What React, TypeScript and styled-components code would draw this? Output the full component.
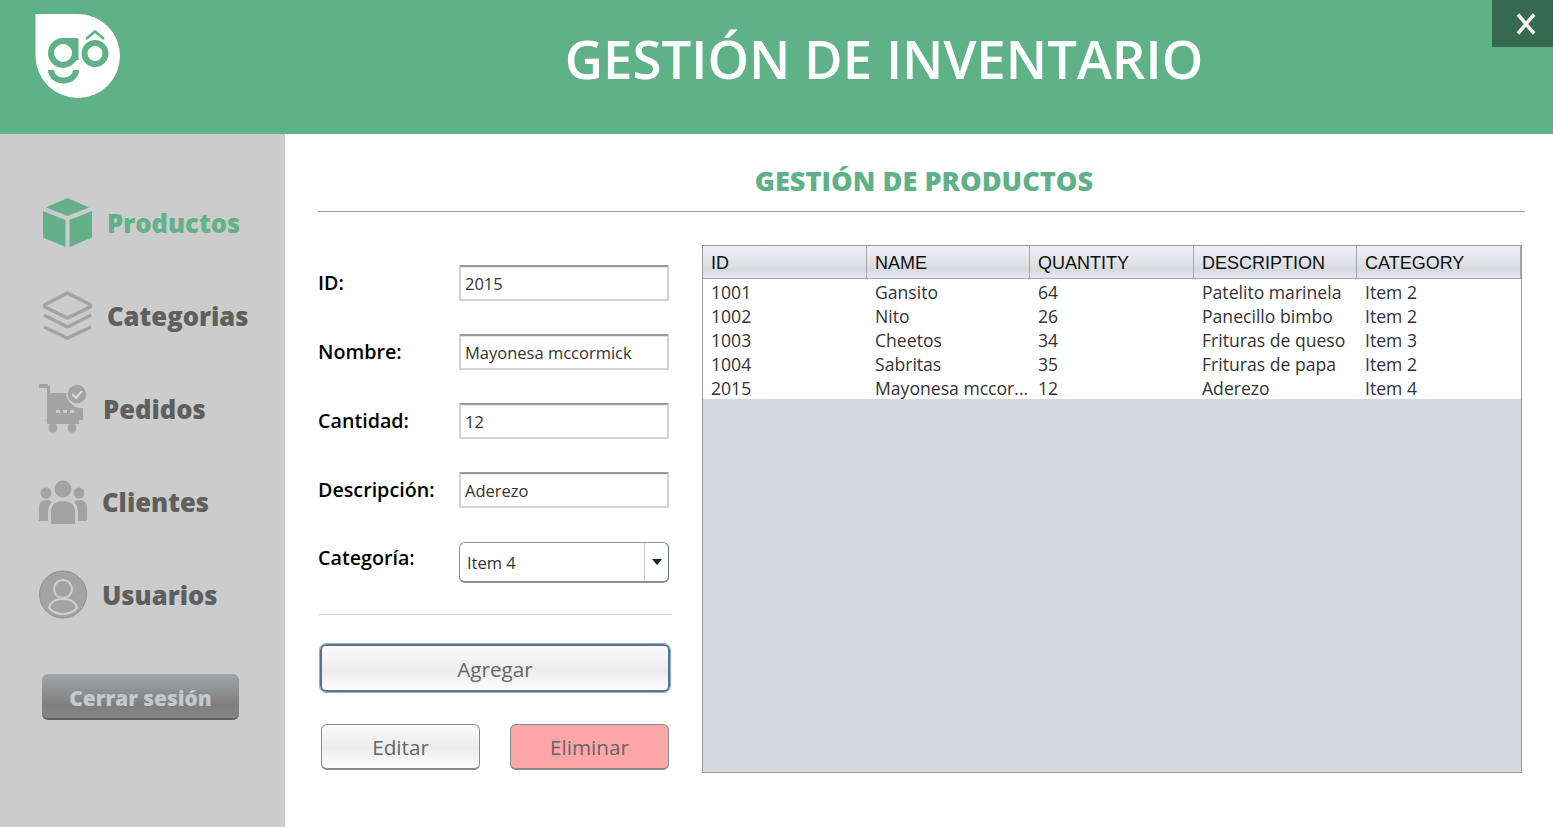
import styled, { createGlobalStyle } from "styled-components";

const green = "#5fb188";
const greyIcon = "#a3a3a3";
const uiFont = `"Open Sans", "Noto Sans", sans-serif`;

const GlobalStyle = createGlobalStyle`
  html, body {
    margin: 0;
    padding: 0;
    background: #fff;
    overflow: hidden;
  }
  * {
    box-sizing: border-box;
  }
`;

const Page = styled.div`
  width: 1553px;
  height: 827px;
  display: flex;
  flex-direction: column;
  font-family: ${uiFont};
`;

const Header = styled.header`
  position: relative;
  height: 134px;
  flex: none;
  background: ${green};
  display: flex;
  align-items: flex-start;
  padding: 14px 0 0 35px;
`;

const HeaderTitle = styled.h1`
  margin: 10px 0 0 -120px;
  width: 1526px;
  padding-left: 240px;
  text-align: center;
  font-size: 52.8px;
  line-height: 70px;
  font-weight: 600;
  color: #fff;
`;

const CloseButton = styled.button`
  position: absolute;
  top: 0;
  right: 0;
  width: 61px;
  height: 47px;
  border: none;
  padding: 0 0 0 7px;
  background: #36694f;
  display: flex;
  align-items: center;
  justify-content: center;
`;

const Content = styled.div`
  flex: 1;
  display: flex;
  min-height: 0;
`;

const Sidebar = styled.nav`
  width: 285px;
  flex: none;
  background: #cccccc;
  display: flex;
  flex-direction: column;
  padding-top: 64px;
`;

const NavItem = styled.a<{ $indent: number; $gap: number; $active?: boolean }>`
  height: 49px;
  margin-bottom: 44px;
  padding-left: ${(p) => p.$indent}px;
  display: flex;
  align-items: center;
  gap: ${(p) => p.$gap}px;
  font-size: 25.6px;
  font-weight: 800;
  color: ${(p) => (p.$active ? "#63b08a" : "#5f5f5f")};
`;

const NavLabel = styled.span`
  padding-top: 1px;
`;

const LogoutButton = styled.button`
  margin: 11px 0 0 42px;
  width: 197px;
  height: 46px;
  border: none;
  border-bottom: 2px solid #626266;
  border-radius: 6px;
  background: linear-gradient(#a3a5a8, #7f7f7f 70%, #858585);
  color: #c4c8d0;
  font-family: ${uiFont};
  font-size: 20.8px;
  font-weight: 800;
  padding: 4px 0 0;
`;

const Main = styled.main`
  flex: 1;
  padding: 0 28px 0 33px;
`;

const SectionTitle = styled.div`
  height: 78px;
  padding: 30px 0 0 5px;
  border-bottom: 1px solid #9a9a9a;
  text-align: center;
  font-size: 27.2px;
  line-height: 34px;
  font-weight: 800;
  color: ${green};
`;

const Body = styled.div`
  display: grid;
  grid-template-columns: 354px 820px;
  column-gap: 30px;
  padding-top: 33px;
`;

const Form = styled.form`
  padding-top: 20px;
  display: flex;
  flex-direction: column;
`;

const Row = styled.label`
  height: 36px;
  margin-bottom: 33px;
  display: grid;
  grid-template-columns: 141px 210px;
  align-items: center;
`;

const FieldLabel = styled.span`
  font-size: 19.7px;
  font-weight: 600;
  color: #000;
  margin-top: -2px;
`;

const TextInput = styled.input`
  width: 210px;
  height: 36px;
  padding: 0 4px;
  border: 2px solid #d4d4d4;
  border-top-color: #9a9a9a;
  box-shadow: inset 0 1px 0 #e9e9e9;
  outline: none;
  background: #fff;
  font-family: ${uiFont};
  font-size: 16.5px;
  color: #333;
`;

const SelectRow = styled.label`
  height: 41px;
  margin-top: 1px;
  display: grid;
  grid-template-columns: 141px 210px;
  align-items: start;
`;

const SelectLabel = styled(FieldLabel)`
  margin-top: 0;
  line-height: 32px;
`;

const SelectBox = styled.div`
  width: 210px;
  height: 41px;
  display: flex;
  border: 1px solid #8a919c;
  border-right-color: #5a6a7c;
  border-bottom-width: 2px;
  border-radius: 6px;
  background: #fff;
  font-size: 16.5px;
  color: #333;
`;

const SelectValue = styled.span`
  flex: 1;
  padding-left: 7px;
  line-height: 39px;
`;

const SelectArrow = styled.span`
  width: 24px;
  border-left: 1px solid #c9ccd3;
  display: flex;
  align-items: center;
  justify-content: center;

  &::after {
    content: "";
    border-left: 5px solid transparent;
    border-right: 5px solid transparent;
    border-top: 6px solid #222;
  }
`;

const Divider = styled.hr`
  width: 354px;
  height: 1px;
  margin: 31px 0 29px;
  border: none;
  background: #d3d6dd;
`;

const ActionButton = styled.button<{ $danger?: boolean; $wide?: boolean }>`
  width: ${(p) => (p.$wide ? "350px" : "159px")};
  height: ${(p) => (p.$wide ? "48px" : "46px")};
  border-radius: 6px;
  border: ${(p) => (p.$wide ? "2px solid #5d7288" : "1px solid #8a8a8a")};
  border-bottom-width: 2px;
  outline: ${(p) => (p.$wide ? "1px solid #8ab3d8" : "none")};
  background: ${(p) =>
    p.$danger ? "#ffa6a8" : "linear-gradient(#fbfbfb, #ececec 55%, #fdfdfd)"};
  font-family: ${uiFont};
  font-size: 20.7px;
  color: #666;
  padding: 1px 0 0;
`;

const ButtonRow = styled.div`
  display: flex;
  gap: 30px;
  margin: 32px 0 0 3px;
`;

const WideButtonWrap = styled.div`
  padding-left: 2px;
`;

const TablePanel = styled.div`
  width: 820px;
  height: 528px;
  border: 1px solid #9a9aa3;
  background: #d5d8e0;
`;

const Table = styled.table`
  width: 100%;
  table-layout: fixed;
  border-collapse: separate;
  border-spacing: 0;
  background: #fff;
`;

const HeadCell = styled.th`
  height: 33px;
  padding: 2px 8px 0 8px;
  text-align: left;
  font-family: "Liberation Sans", Arial, sans-serif;
  font-size: 18px;
  font-weight: 400;
  color: #111;
  background: linear-gradient(#f0f1f4, #d9dbe1 75%, #e6e7ea);
  border-bottom: 1px solid #a4a6ae;
  border-right: 1px solid #a4a6ae;
`;

const BodyCell = styled.td`
  height: 24px;
  padding: 3px 0 0 8px;
  font-size: 17.6px;
  font-weight: 500;
  line-height: 21px;
  color: #333;
  white-space: nowrap;
`;

const Logo = () => (
  <svg width="86" height="85" viewBox="0 0 86 85">
    <path d="M0.5 0H43A42 42 0 0 1 43 84A42.5 42 0 0 1 0.5 42Z" fill="#fff" />
    <g fill="none" stroke={green} strokeWidth="6">
      <circle cx="28" cy="39" r="12" />
      <path d="M27 27H40.5V46" />
      <path d="M16 56a12.5 10.5 0 0 0 25 0" />
      <circle cx="60" cy="39.5" r="10.5" />
      <path d="M51 25L60 17.5L69 25" strokeWidth="2.5" />
    </g>
  </svg>
);

const CubeIcon = () => (
  <svg width="49" height="49" viewBox="0 0 49 49" fill="#63b08a">
    <path d="M24.5 0L46 9.5L24.5 18L3 9.5Z" />
    <path d="M0 13L22.5 22V49L0 39.5Z" />
    <path d="M49 13L26.5 22V49L49 39.5Z" />
  </svg>
);

const LayersIcon = () => (
  <svg width="49" height="49" viewBox="0 0 49 49" fill="none" stroke={greyIcon} strokeWidth="3.5">
    <path d="M24.5 2L47 13.5Q48 15 47 16L24.5 27L2 16Q1 15 2 13.5Z" />
    <path d="M1 24L24.5 36L48 24" />
    <path d="M1 36L24.5 47L48 36" />
  </svg>
);

const CartIcon = () => (
  <svg width="49" height="49" viewBox="0 0 49 49" fill={greyIcon}>
    <path d="M0 0H8L11 3V10H8V4H0Z" />
    <path d="M8 9H28A14 14 0 0 0 44 24V36H40V40H8V37L6 36H8Z" />
    <circle cx="38" cy="10" r="10" stroke="#cccccc" strokeWidth="1.5" />
    <path d="M33 10L37 14L43 7" fill="none" stroke="#dcdcdc" strokeWidth="2" />
    <circle cx="14" cy="44" r="4.5" />
    <circle cx="33" cy="44" r="4.5" />
    <rect x="17" y="26" width="4" height="3" fill="#cccccc" />
    <rect x="24" y="26" width="4" height="3" fill="#cccccc" />
    <rect x="31" y="26" width="4" height="3" fill="#cccccc" />
  </svg>
);

const PeopleIcon = () => (
  <svg width="48" height="44" viewBox="0 0 48 44" fill={greyIcon}>
    <circle cx="24" cy="9" r="8.5" />
    <circle cx="7" cy="13" r="5.5" />
    <circle cx="40" cy="13" r="5.5" />
    <path d="M12 44V32Q12 21 24 21Q36 21 36 32V44Z" />
    <path d="M0 41V28Q0 20 7 20Q11 20 13 22Q9 26 9 32V41Z" />
    <path d="M48 41V28Q48 20 41 20Q37 20 35 22Q39 26 39 32V41Z" />
  </svg>
);

const UserIcon = () => (
  <svg width="48" height="49" viewBox="0 0 48 49">
    <circle cx="24" cy="24.5" r="23.5" fill={greyIcon} stroke="#8f8f8f" />
    <circle cx="24" cy="19" r="9" fill="none" stroke="#d0d0d0" strokeWidth="2" />
    <path d="M10 38Q12 29 24 29Q36 29 38 38Q32 44 24 44Q16 44 10 38Z" fill="none" stroke="#d0d0d0" strokeWidth="2" />
  </svg>
);

const rows = [
  ["1001", "Gansito", "64", "Patelito marinela", "Item 2"],
  ["1002", "Nito", "26", "Panecillo bimbo", "Item 2"],
  ["1003", "Cheetos", "34", "Frituras de queso", "Item 3"],
  ["1004", "Sabritas", "35", "Frituras de papa", "Item 2"],
  ["2015", "Mayonesa mccor...", "12", "Aderezo", "Item 4"],
];

const columns = [
  { name: "ID", width: 164 },
  { name: "NAME", width: 163 },
  { name: "QUANTITY", width: 164 },
  { name: "DESCRIPTION", width: 163 },
  { name: "CATEGORY", width: 164 },
];

const fields = [
  { label: "ID:", value: "2015" },
  { label: "Nombre:", value: "Mayonesa mccormick" },
  { label: "Cantidad:", value: "12" },
  { label: "Descripción:", value: "Aderezo" },
];

const App = () => {
  return (
    <Page>
      <GlobalStyle />
      <Header>
        <Logo />
        <HeaderTitle>GESTIÓN DE INVENTARIO</HeaderTitle>
        <CloseButton aria-label="Cerrar">
          <svg width="20" height="22" viewBox="0 0 20 22" stroke="#fff" strokeWidth="3.5">
            <path d="M2 1.5L18 20.5M18 1.5L2 20.5" />
          </svg>
        </CloseButton>
      </Header>
      <Content>
        <Sidebar>
          <NavItem $indent={43} $gap={15} $active>
            <CubeIcon />
            <NavLabel>Productos</NavLabel>
          </NavItem>
          <NavItem $indent={43} $gap={15}>
            <LayersIcon />
            <NavLabel>Categorias</NavLabel>
          </NavItem>
          <NavItem $indent={39} $gap={15}>
            <CartIcon />
            <NavLabel>Pedidos</NavLabel>
          </NavItem>
          <NavItem $indent={39} $gap={15}>
            <PeopleIcon />
            <NavLabel>Clientes</NavLabel>
          </NavItem>
          <NavItem $indent={39} $gap={15}>
            <UserIcon />
            <NavLabel>Usuarios</NavLabel>
          </NavItem>
          <LogoutButton>Cerrar sesión</LogoutButton>
        </Sidebar>
        <Main>
          <SectionTitle>GESTIÓN DE PRODUCTOS</SectionTitle>
          <Body>
            <Form>
              {fields.map((f) => (
                <Row key={f.label}>
                  <FieldLabel>{f.label}</FieldLabel>
                  <TextInput defaultValue={f.value} />
                </Row>
              ))}
              <SelectRow>
                <SelectLabel>Categoría:</SelectLabel>
                <SelectBox>
                  <SelectValue>Item 4</SelectValue>
                  <SelectArrow />
                </SelectBox>
              </SelectRow>
              <Divider />
              <WideButtonWrap>
                <ActionButton type="button" $wide>
                  Agregar
                </ActionButton>
              </WideButtonWrap>
              <ButtonRow>
                <ActionButton type="button">Editar</ActionButton>
                <ActionButton type="button" $danger>
                  Eliminar
                </ActionButton>
              </ButtonRow>
            </Form>
            <TablePanel>
              <Table>
                <colgroup>
                  {columns.map((c) => (
                    <col key={c.name} width={c.width} />
                  ))}
                </colgroup>
                <thead>
                  <tr>
                    {columns.map((c) => (
                      <HeadCell key={c.name}>{c.name}</HeadCell>
                    ))}
                  </tr>
                </thead>
                <tbody>
                  {rows.map((r) => (
                    <tr key={r[0]}>
                      {r.map((cell, i) => (
                        <BodyCell key={i}>{cell}</BodyCell>
                      ))}
                    </tr>
                  ))}
                </tbody>
              </Table>
            </TablePanel>
          </Body>
        </Main>
      </Content>
    </Page>
  );
};

export default App;
